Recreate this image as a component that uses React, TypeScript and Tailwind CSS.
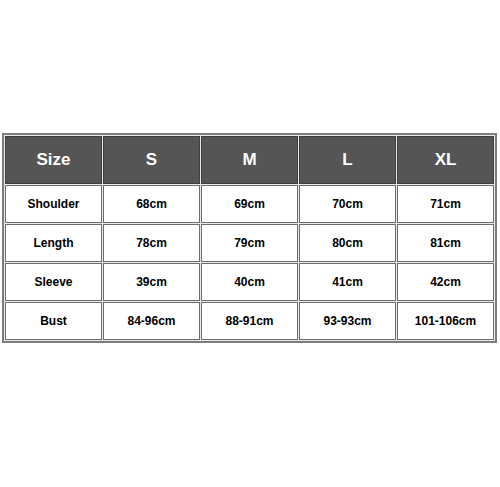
const sizes = ["S", "M", "L", "XL"];

const rows = [
  { label: "Shoulder", values: ["68cm", "69cm", "70cm", "71cm"] },
  { label: "Length", values: ["78cm", "79cm", "80cm", "81cm"] },
  { label: "Sleeve", values: ["39cm", "40cm", "41cm", "42cm"] },
  { label: "Bust", values: ["84-96cm", "88-91cm", "93-93cm", "101-106cm"] },
];

export default function App() {
  return (
    <div className="w-[500px] h-[487px] bg-white pt-[133px] pl-[2px] font-['Liberation_Sans',Arial,sans-serif]">
      <table className="w-[495px] table-fixed border-separate border-spacing-[1px] border-2 border-[#7d7d7d] bg-[#e9e9e9]">
        <thead>
          <tr className="h-[48px]">
            <th className="bg-[#555555] border border-[#3f3f3f] text-white text-[17px] font-bold">Size</th>
            {sizes.map((s) => (
              <th key={s} className="bg-[#555555] border border-[#3f3f3f] text-white text-[17px] font-bold">
                {s}
              </th>
            ))}
          </tr>
        </thead>
        <tbody>
          {rows.map((r) => (
            <tr key={r.label} className="h-[38px]">
              <td className="bg-white border border-[#6e6e6e] text-center text-[12px] font-bold text-black">{r.label}</td>
              {r.values.map((v, i) => (
                <td key={i} className="bg-white border border-[#6e6e6e] text-center text-[12px] font-bold text-black">
                  {v}
                </td>
              ))}
            </tr>
          ))}
        </tbody>
      </table>
    </div>
  );
}
